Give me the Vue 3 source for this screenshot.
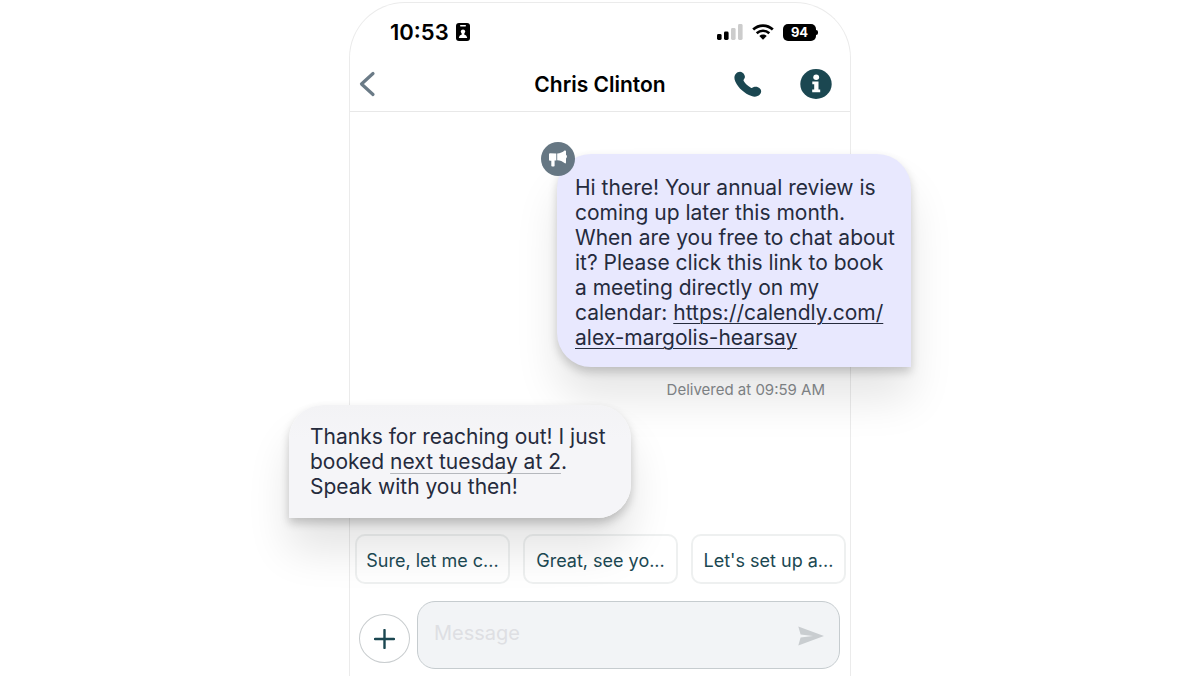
<script setup>
import { ref } from 'vue'

const draft = ref('')
const replies = ['Sure, let me c...', 'Great, see yo...', "Let's set up a..."]
</script>

<template>
  <main class="phone">
    <div class="status">
      <div class="status-left">
        <time class="clock">10:53</time>
        <svg width="14" height="18" viewBox="0 0 14 18" aria-hidden="true">
          <rect width="14" height="18" rx="3" fill="#000" />
          <rect x="4" y="2" width="6" height="1.4" rx=".7" fill="#fff" />
          <circle cx="7" cy="8.6" r="2.2" fill="#fff" />
          <path d="M2.8 15c.2-2.2 1.6-3.3 3-3.6v-1.4h2.4v1.4c1.400.3 2.800 1.400 3 3.600z" fill="#fff" />
        </svg>
      </div>
      <div class="status-right">
        <svg width="26" height="16" viewBox="0 0 26 16" aria-hidden="true">
          <rect x="0" y="10" width="4.600" height="6" rx="1.400" fill="#000" />
          <rect x="7" y="7.500" width="4.600" height="8.500" rx="1.400" fill="#000" />
          <rect x="14" y="4" width="4.600" height="12" rx="1.400" fill="#ccc" />
          <rect x="21" y="0" width="4.600" height="16" rx="1.400" fill="#ccc" />
        </svg>
        <svg width="22" height="16" viewBox="0 0 22 16" aria-hidden="true">
          <path d="M1.200 5.500C6.800.2 15.200.2 20.800 5.500" fill="none" stroke="#000" stroke-width="2.700" />
          <path d="M4.700 9.200c3.600-3.300 9-3.300 12.600 0" fill="none" stroke="#000" stroke-width="2.600" />
          <path d="M7.300 11.900c2.200-1.900 5.200-1.900 7.400 0L11 15.800z" fill="#000" />
        </svg>
        <span class="battery">94</span>
      </div>
    </div>

    <header class="bar">
      <button class="icon-btn" type="button" aria-label="Back">
        <svg width="17" height="26" viewBox="0 0 17 26">
          <path d="M14 2.500 2.500 13l11.500 10.500" fill="none" stroke="#6b7b87" stroke-width="3.200" stroke-linecap="round" stroke-linejoin="round" />
        </svg>
      </button>
      <h1>Chris Clinton</h1>
      <div class="actions">
        <button class="icon-btn" type="button" aria-label="Call">
          <svg width="28" height="26" viewBox="0 0 28 26">
            <path d="M1.700 3C3.400.9 6.500.1 8.600 1.700C10.600 3.200 11.600 5.700 10.400 7.500C9.700 8.500 9.200 9.100 9.700 10.100C11.300 13 13.800 15.200 16.900 16.700C18 17.200 18.700 16.700 19.800 16.100C21.700 15.100 24.200 15.800 25.900 17.400C27.700 19.100 27.500 21.700 25.800 23.500C23.800 25.700 20.500 26.200 17.600 25.100C10.400 22.300 4.500 17.200 1.300 10.400C.1 7.900 0 5 1.700 3Z" fill="#1b4751" />
          </svg>
        </button>
        <button class="icon-btn" type="button" aria-label="Contact details">
          <svg width="32" height="30" viewBox="0 0 32 30">
            <ellipse cx="16" cy="15" rx="15.700" ry="15" fill="#1b4751" />
            <ellipse cx="16.200" cy="8.200" rx="2.900" ry="2.700" fill="#fff" />
            <path d="M12.300 12.500h6.200v8h1.700v2.700h-8v-2.700h2v-5.300h-1.900z" fill="#fff" />
          </svg>
        </button>
      </div>
    </header>

    <section class="thread">
      <article class="bubble sent">
        <span class="badge">
          <svg width="20" height="18" viewBox="0 0 20 18" aria-label="Campaign message">
            <path d="M1 4.200Q1 3.200 2 3.200L8.300 3.600V10.500L6.600 10.600V15.800Q6.600 16.600 5.800 16.600H4.200Q3.300 16.600 3.300 15.800V10.700H2Q1 10.700 1 9.700z" fill="#fff" />
            <path d="M9.200 3.500c3-.1 5.500-1.200 7.300-2.900.7-.4 1.500-.2 1.500.6v3.600c1.300.8 1.300 2.800 0 3.600v4.200c0 .9-.9 1.100-1.500.5C14.700 11.400 12.200 10.400 9.200 10.300z" fill="#fff" />
          </svg>
        </span>
        Hi there! Your annual review is<br />
        coming up later this month.<br />
        When are you free to chat about<br />
        it? Please click this link to book<br />
        a meeting directly on my<br />
        calendar: <a href="https://calendly.com/alex-margolis-hearsay">https://calendly.com/<br />alex-margolis-hearsay</a>
      </article>
      <p class="delivered">Delivered at 09:59 AM</p>
      <article class="bubble received">
        Thanks for reaching out! I just<br />
        booked <span class="date">next tuesday at 2</span>.<br />
        Speak with you then!
      </article>
    </section>

    <div class="replies">
      <button v-for="r in replies" :key="r" class="chip" type="button">{{ r }}</button>
    </div>

    <form class="composer" @submit.prevent>
      <button class="add" type="button" aria-label="Add attachment">
        <svg width="21" height="20" viewBox="0 0 21 20">
          <path d="M10.500 1v18M1 10h19" fill="none" stroke="#1b4751" stroke-width="2.400" stroke-linecap="round" />
        </svg>
      </button>
      <div class="field">
        <input v-model="draft" type="text" placeholder="Message" aria-label="Message" />
        <button class="icon-btn" type="submit" aria-label="Send">
          <svg width="26" height="20" viewBox="0 0 26 20">
            <path d="M.3.600 26 10 .3 19.400 2.600 11.500 15 10 2.600 8.500z" fill="#c9cdd0" />
          </svg>
        </button>
      </div>
    </form>
  </main>
</template>

<style>
body {
  background: #fff;
  overflow: hidden;
}
</style>

<style scoped>
* {
  box-sizing: border-box;
}
.phone {
  display: flex;
  flex-direction: column;
  max-width: 502px;
  min-height: calc(100vh - 2px);
  margin: 2px auto 0;
  border: 1px solid #ebebeb;
  border-bottom: 0;
  border-radius: 56px 56px 0 0;
  font-family: Inter, "Liberation Sans", sans-serif;
  color: #252b3d;
}
button {
  font: inherit;
  cursor: pointer;
}
.icon-btn {
  display: flex;
  padding: 0;
  border: 0;
  background: none;
}
.status {
  display: flex;
  justify-content: space-between;
  align-items: center;
  height: 56px;
  padding: 2px 34px 0 40px;
}
.status-left,
.status-right {
  display: flex;
  align-items: center;
}
.status-left {
  gap: 7px;
}
.status-right {
  gap: 9px;
}
.clock {
  font-size: 22px;
  font-weight: 600;
  color: #000;
}
.battery {
  position: relative;
  width: 33px;
  border-radius: 5px;
  background: #000;
  color: #fff;
  font-size: 13px;
  font-weight: 700;
  line-height: 17px;
  text-align: center;
}
.battery::after {
  content: "";
  position: absolute;
  top: 6px;
  right: -2px;
  width: 2px;
  height: 5px;
  border-radius: 0 2px 2px 0;
  background: #000;
}
.bar {
  display: grid;
  grid-template-columns: 1fr auto 1fr;
  align-items: center;
  height: 53px;
  padding: 0 18px 2px 9px;
  border-bottom: 1px solid #e8e8e8;
}
h1 {
  margin: 0 0 0 9px;
  font-size: 21px;
  font-weight: 600;
  color: #000;
}
.actions {
  display: flex;
  justify-content: flex-end;
  align-items: center;
  gap: 38px;
}
.thread {
  display: flex;
  flex-direction: column;
  padding: 42px 0 16px;
}
.bubble {
  position: relative;
  font-size: 21px;
  line-height: 25px;
  white-space: nowrap;
}
.sent {
  align-self: flex-end;
  width: 354px;
  margin-right: -61px;
  padding: 21px 18px 17px;
  border-radius: 34px 34px 0 34px;
  background: #e8e8fe;
  box-shadow: 0 5px 10px rgba(0, 0, 0, 0.18), 0 32px 44px rgba(0, 0, 0, 0.1);
}
.sent a {
  color: inherit;
  text-decoration-thickness: 1px;
  text-underline-offset: 3px;
}
.badge {
  position: absolute;
  top: -12px;
  left: -16px;
  display: flex;
  align-items: center;
  justify-content: center;
  width: 34px;
  height: 34px;
  border-radius: 50%;
  background: #667783;
}
.delivered {
  position: relative;
  align-self: flex-end;
  margin: 13px 25px 5px 0;
  font-size: 15px;
  line-height: 20px;
  color: #7c8083;
}
.received {
  align-self: flex-start;
  width: 342px;
  margin-left: -61px;
  padding: 19px 21px;
  border-radius: 34px 34px 34px 0;
  background: linear-gradient(#f3f3f5, #f5f5f8 30%);
  box-shadow: 0 5px 10px rgba(0, 0, 0, 0.2), 0 32px 44px rgba(0, 0, 0, 0.11);
}
.date {
  text-decoration: underline #b5b8bd 1px;
  text-underline-offset: 4px;
  text-decoration-skip-ink: none;
}
.replies {
  position: relative;
  display: grid;
  grid-template-columns: repeat(3, 1fr);
  gap: 13px;
  padding: 0 4px 0 5px;
}
.chip {
  height: 50px;
  padding: 2px 0 0;
  border: 2px solid rgba(40, 60, 60, 0.08);
  border-radius: 10px;
  background: transparent;
  font-size: 18px;
  color: #1b4751;
  white-space: nowrap;
}
.composer {
  position: relative;
  display: flex;
  align-items: flex-end;
  gap: 7px;
  padding: 17px 10px 8px 9px;
}
.add {
  display: flex;
  align-items: center;
  justify-content: center;
  flex: none;
  width: 51px;
  height: 49px;
  margin-bottom: 6px;
  padding: 0;
  border: 1px solid #c9cdcf;
  border-radius: 50%;
  background: #fff;
}
.field {
  display: flex;
  flex: 1;
  align-items: center;
  height: 68px;
  padding: 1px 15px 0 16px;
  border: 1px solid #c6cccf;
  border-radius: 18px;
  background: #f2f4f6;
}
input {
  flex: 1;
  min-width: 0;
  padding: 0 0 6px;
  border: 0;
  outline: 0;
  background: none;
  font: inherit;
  font-size: 20px;
}
input::placeholder {
  color: #dedfe3;
  opacity: 1;
}
</style>
